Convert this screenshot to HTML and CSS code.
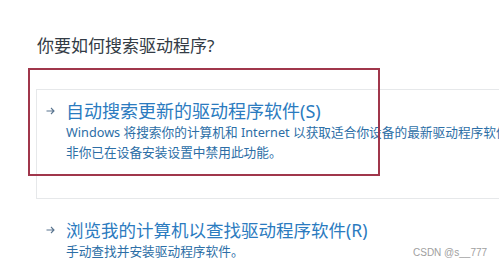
FILE: index.html
```html
<!DOCTYPE html>
<html lang="zh-CN">
<head>
<meta charset="utf-8">
<title>你要如何搜索驱动程序?</title>
<link rel="stylesheet" href="styles.css">
</head>
<body>
<div class="page">
  <h1 class="title">你要如何搜索驱动程序?</h1>
  <div class="option card">
    <svg class="arrow" width="9" height="8" viewBox="0 0 9 8"><path d="M0.5 4H8M5 1L8 4L5 7" fill="none" stroke="#5a7590" stroke-width="1.1"/></svg>
    <div class="heading">自动搜索更新的驱动程序软件(S)</div>
    <div class="desc">
      <span class="line">Windows 将搜索你的计算机和 Internet 以获取适合你设备的最新驱动程序软件，除</span>
      <span class="line">非你已在设备安装设置中禁用此功能。</span>
    </div>
  </div>
  <div class="option plain">
    <svg class="arrow" width="9" height="8" viewBox="0 0 9 8"><path d="M0.5 4H8M5 1L8 4L5 7" fill="none" stroke="#5a7590" stroke-width="1.1"/></svg>
    <div class="heading">浏览我的计算机以查找驱动程序软件(R)</div>
    <div class="desc">
      <span class="line">手动查找并安装驱动程序软件。</span>
    </div>
  </div>
  <div class="highlight"></div>
  <div class="watermark">CSDN @s__777</div>
</div>
</body>
</html>
```

FILE: styles.css
```css
html, body {
  margin: 0;
  padding: 0;
  background: #ffffff;
}
body {
  width: 499px;
  height: 267px;
  overflow: hidden;
  font-family: "Noto Sans", "Noto Sans CJK SC", sans-serif;
}
.page {
  position: relative;
  width: 499px;
  height: 267px;
  padding-top: 34px;
  box-sizing: border-box;
}
.title {
  margin: 0 0 0 37px;
  font-size: 17px;
  font-weight: 400;
  line-height: 24px;
  color: #333b45;
}
.option {
  display: grid;
  grid-template-columns: 20px 1fr;
  align-items: center;
  width: 600px;
  box-sizing: border-box;
  padding-left: 9px;
}
.card {
  margin: 31px 0 0 36px;
  height: 110px;
  border: 1px solid #e6e8ea;
  border-right: none;
  padding-top: 10px;
  align-content: start;
}
.plain {
  margin: 20px 0 0 36px;
  padding-left: 10px;
}
.arrow {
  grid-column: 1;
  grid-row: 1;
  display: block;
}
.heading {
  grid-column: 2;
  grid-row: 1;
  font-size: 17.5px;
  line-height: 22px;
  color: #2b7bbf;
  white-space: nowrap;
}
.card .heading {
  font-size: 18px;
}
.desc {
  grid-column: 2;
  grid-row: 2;
  font-size: 12.7px;
  line-height: 20px;
  color: #2c6ea6;
}
.line {
  display: block;
  white-space: nowrap;
}
.highlight {
  position: absolute;
  left: 28px;
  top: 68px;
  width: 352px;
  height: 108px;
  box-sizing: border-box;
  border: 2px solid #a0364b;
}
.watermark {
  position: absolute;
  left: 413px;
  top: 246px;
  font-family: "Liberation Sans", Arial, sans-serif;
  font-size: 10px;
  line-height: 14px;
  color: #a0a0a0;
}
```
